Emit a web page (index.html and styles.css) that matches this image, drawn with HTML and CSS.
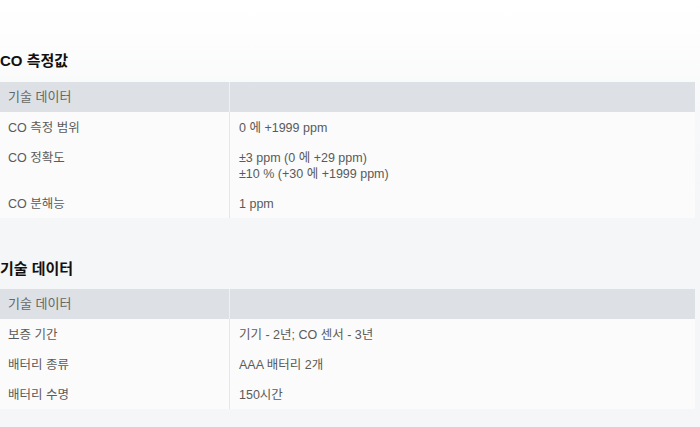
FILE: index.html
```html
<!DOCTYPE html>
<html lang="ko">
<head>
<meta charset="utf-8">
<title>CO 측정값</title>
<link rel="stylesheet" href="styles.css">
</head>
<body>
<main class="page">
  <section class="spec first">
    <h2 class="spec-title">CO 측정값</h2>
    <div class="spec-table">
      <div class="cell head key">기술 데이터</div>
      <div class="cell head val"></div>
      <div class="cell key">CO 측정 범위</div>
      <div class="cell val">0 에 +1999 ppm</div>
      <div class="cell key">CO 정확도</div>
      <div class="cell val">±3 ppm (0 에 +29 ppm)<br>±10 % (+30 에 +1999 ppm)</div>
      <div class="cell key">CO 분해능</div>
      <div class="cell val">1 ppm</div>
    </div>
  </section>
  <section class="spec second">
    <h2 class="spec-title">기술 데이터</h2>
    <div class="spec-table">
      <div class="cell head key">기술 데이터</div>
      <div class="cell head val"></div>
      <div class="cell key">보증 기간</div>
      <div class="cell val">기기 - 2년; CO 센서 - 3년</div>
      <div class="cell key">배터리 종류</div>
      <div class="cell val">AAA 배터리 2개</div>
      <div class="cell key">배터리 수명</div>
      <div class="cell val">150시간</div>
    </div>
  </section>
</main>
</body>
</html>
```

FILE: styles.css
```css
html, body {
  margin: 0;
  padding: 0;
}
body {
  width: 700px;
  height: 427px;
  overflow: hidden;
  background: linear-gradient(to bottom, #ffffff 0px, #fdfdfd 40px, #f7f8f9 110px, #f5f6f8 220px, #f5f6f8 427px);
  font-family: "Liberation Sans", Arial, "Noto Sans CJK KR", sans-serif;
  color: #555;
}
.page {
  display: flex;
  flex-direction: column;
  padding-top: 51px;
}
.spec.second {
  margin-top: 41px;
}
.spec-title {
  margin: 0 0 11px 0;
  font-size: 15px;
  line-height: 20px;
  font-weight: bold;
  color: #111;
}
.second .spec-title {
  margin-bottom: 10px;
}
.spec-table {
  width: 695px;
  display: grid;
  grid-template-columns: 230px 1fr;
  background: #fbfbfb;
}
.cell {
  font-size: 12.5px;
  line-height: 16px;
  padding: 8px 9px 6px 9px;
  color: #5a5a5a;
}
.cell.key {
  border-right: 1px solid #e6e6e6;
  padding-left: 8px;
}
.cell.head {
  background: #dde1e5;
  color: #666;
  font-size: 13px;
  padding-top: 7px;
  padding-bottom: 7px;
}
.cell.head.key {
  border-right-color: #eef0f2;
}
```
